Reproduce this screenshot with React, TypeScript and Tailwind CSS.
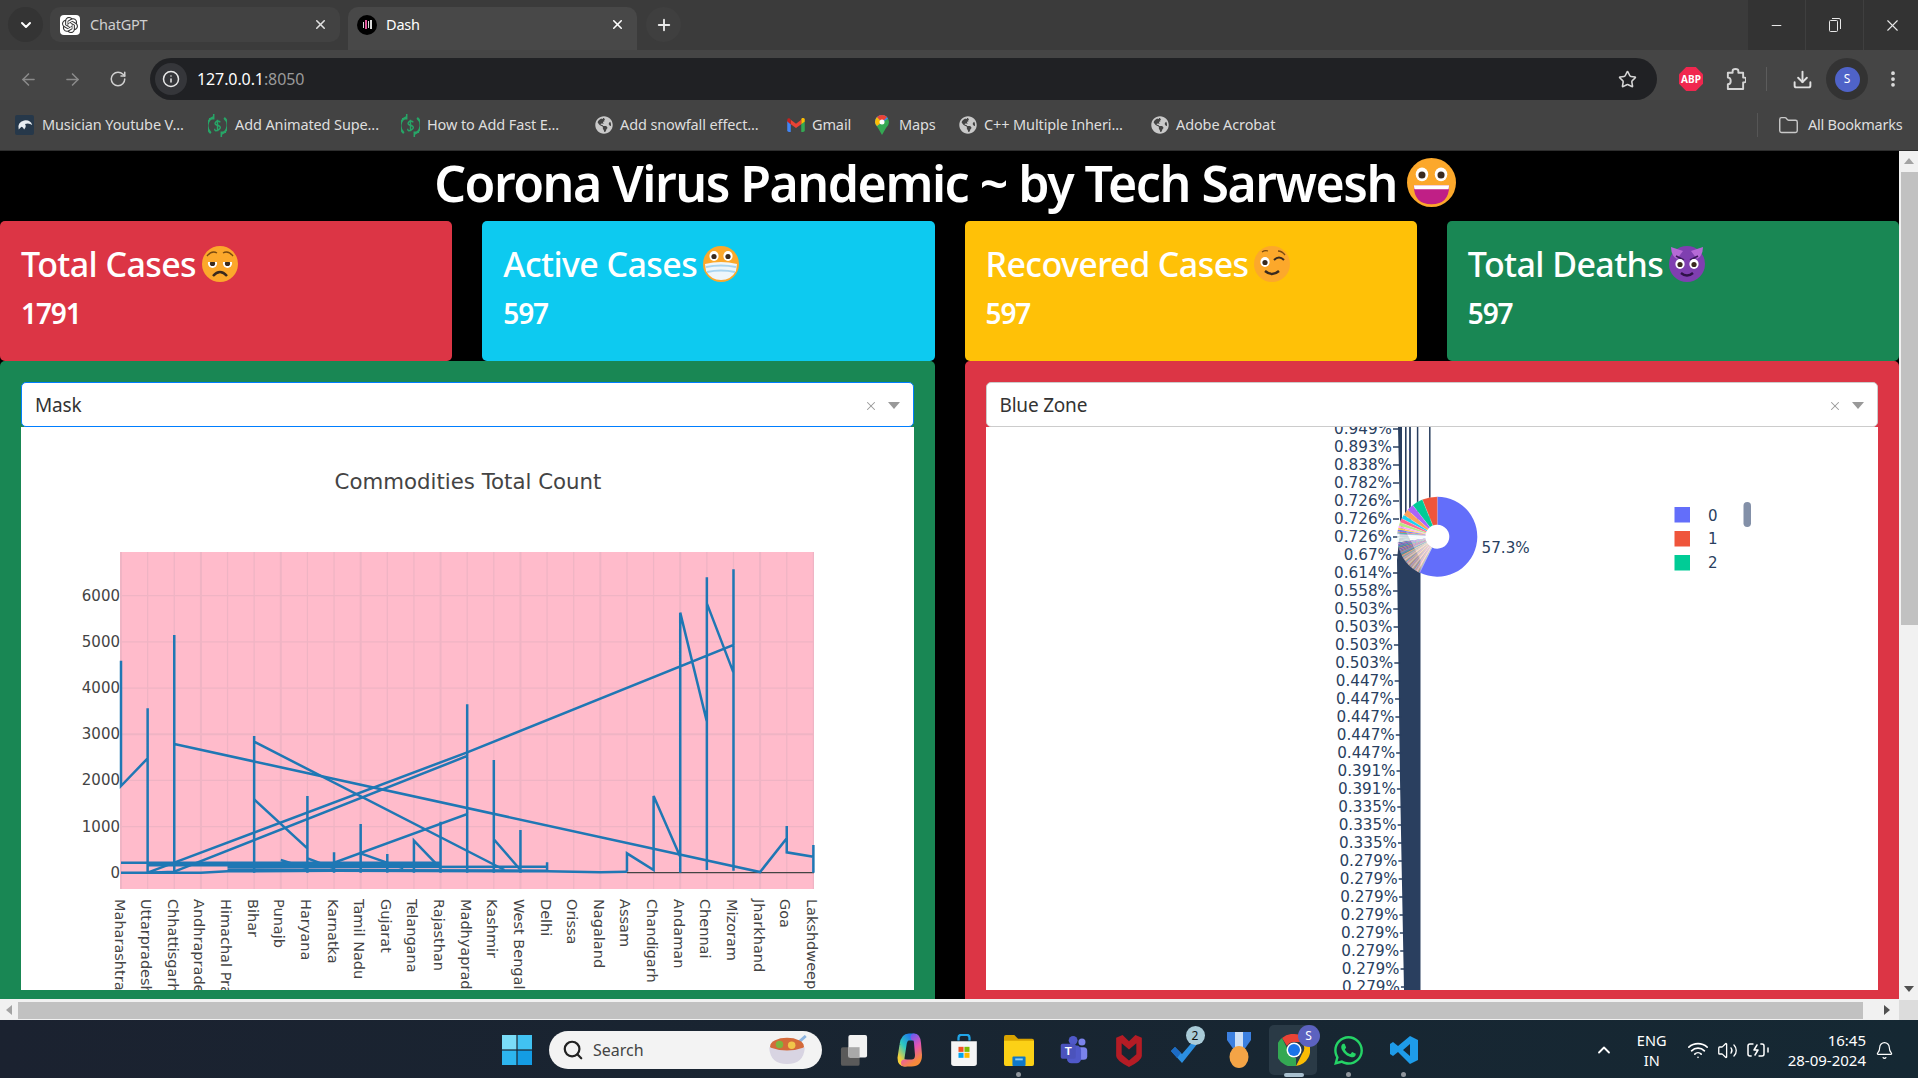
import {
  ArrowLeft,
  ArrowRight,
  BatteryCharging,
  Bell,
  ChevronDown,
  ChevronUp,
  Download,
  EllipsisVertical,
  Folder,
  Info,
  Minus,
  Plus,
  RotateCw,
  Search,
  Star,
  Volume2,
  Wifi,
  X,
} from "lucide-react";
import { FaGlobeAmericas, FaWhatsapp } from "react-icons/fa";
import { SiOpenai } from "react-icons/si";

const FONT = "font-['Noto_Sans','Open_Sans',sans-serif]";

const states = [
  "Maharashtra", "Uttarpradesh", "Chhattisgarh", "Andhrapradesh", "Himachal Pradesh", "Bihar", "Punajb",
  "Haryana", "Karnatka", "Tamil Nadu", "Gujarat", "Telangana", "Rajasthan", "Madhyapradesh", "Kashmir",
  "West Bengal", "Delhi", "Orissa", "Nagaland", "Assam", "Chandigarh", "Andaman", "Chennai", "Mizoram",
  "Jharkhand", "Goa", "Lakshdweep",
];

const px = (i: number) => 121 + i * 26.63;
const py = (z: number) => 540 + z / 3;

// line trace, [category index, y measured on the crop]
const traces: [number, number][][] = [
  [[0, 362], [0, 738], [1, 655], [1, 505], [1, 998], [2, 995], [2, 285], [2, 612], [24, 996], [25, 895], [25, 858], [25, 937], [26, 950], [26, 915], [26, 998]],
  [[2, 968], [13, 637], [23, 315], [23, 88], [23, 992], [23, 398], [22, 190], [22, 112], [22, 990], [22, 545], [21, 218], [21, 998], [21, 950], [20, 768], [20, 990], [19, 940], [19, 995]],
  [[1, 998], [2, 968]],
  [[2, 995], [13, 648], [13, 493], [13, 998], [13, 822], [8, 968], [8, 937], [8, 998]],
  [[5, 998], [5, 588], [5, 605], [14.4, 990]],
  [[5, 778], [7, 925], [7, 768], [7, 998], [7, 955], [8, 985]],
  [[14, 998], [14, 660], [14, 898], [15, 990], [15, 870], [15, 998]],
  [[9, 998], [9, 852], [9, 940], [10.6, 985]],
  [[10, 998], [10, 942]],
  [[11, 998], [11, 902], [12, 985], [12, 845], [12, 998]],
  [[6, 960], [7, 985]],
  [[0, 968], [12, 968]],
  [[1, 976], [12, 976]],
  [[4, 982], [16, 980], [16, 967], [16, 992], [4, 990]],
  [[0, 998], [3, 998], [4, 994], [8, 992], [16, 994], [18, 997], [19, 995]],
];

const yTicks = [0, 1000, 2000, 3000, 4000, 5000, 6000];

const LineChart = () => (
  <svg viewBox="21 427 893 563" className="h-[563px] w-[893px] bg-white">
    <text x="468" y="489" textAnchor="middle" fontSize="21.3" fill="#444" fontFamily="DejaVu Sans">
      Commodities Total Count
    </text>
    <rect x="121" y="552" width="693" height="337" fill="#ffbbcb" />
    {states.map((_, i) => (
      <line key={i} x1={px(i)} x2={px(i)} y1="552" y2="889" stroke="#efb4c4" strokeWidth={i % 3 === 0 ? 2 : 1.25} />
    ))}
    {yTicks.map((v) => {
      const y = 872.7 - v * 0.04617;
      return (
        <g key={v}>
          {v > 0 && <line x1="121" x2="814" y1={y} y2={y} stroke="#efb4c4" strokeWidth={v === 3000 ? 2 : 1.25} />}
          <text x="120" y={y + 5} textAnchor="end" fontSize="15" fill="#444" fontFamily="DejaVu Sans">
            {v}
          </text>
        </g>
      );
    })}
    <line x1="627" x2="814" y1="872.7" y2="872.7" stroke="#444" strokeWidth="1.25" />
    {traces.map((t, i) => (
      <polyline
        key={i}
        points={t.map(([c, z]) => `${px(c)},${py(z)}`).join(" ")}
        fill="none"
        stroke="#1f77b4"
        strokeWidth="2.5"
        strokeLinejoin="miter"
      />
    ))}
    {states.map((s, i) => (
      <text
        key={s}
        transform={`translate(${px(i) - 6.5} 899) rotate(90)`}
        fontSize="14.5"
        fill="#444"
        fontFamily="DejaVu Sans"
      >
        {s}
      </text>
    ))}
  </svg>
);

const pieLabels = [
  "0.949%", "0.893%", "0.838%", "0.782%", "0.726%", "0.726%", "0.726%", "0.67%", "0.614%", "0.558%", "0.503%",
  "0.503%", "0.503%", "0.503%", "0.447%", "0.447%", "0.447%", "0.447%", "0.447%", "0.391%", "0.391%", "0.335%",
  "0.335%", "0.335%", "0.279%", "0.279%", "0.279%", "0.279%", "0.279%", "0.279%", "0.279%", "0.279%",
];

const palette = ["#636efa", "#ef553b", "#00cc96", "#ab63fa", "#ffa15a", "#19d3f3", "#ff6692", "#b6e880", "#ff97ff", "#fecb52"];
const CX = 1437.3;
const CY = 536.7;

const slicePath = (a0: number, a1: number) => {
  const r0 = 40;
  const r1 = 12;
  const p = (r: number, a: number) => {
    const t = (a * Math.PI) / 180;
    return `${(CX + r * Math.sin(t)).toFixed(2)} ${(CY - r * Math.cos(t)).toFixed(2)}`;
  };
  const big = a1 - a0 > 180 ? 1 : 0;
  return `M${p(r1, a0)}L${p(r0, a0)}A${r0} ${r0} 0 ${big} 1 ${p(r0, a1)}L${p(r1, a1)}A${r1} ${r1} 0 ${big} 0 ${p(r1, a0)}Z`;
};

// widths in degrees, counter-clockwise from 12 o'clock after the large slice
const buildSlices = () => {
  const out: { a0: number; a1: number; color: string; stroke: number }[] = [];
  const widths = [22, 16, 10, 9, 6, 6, 5, 3, 3, 2.4, 1.5, 1.5, 1.2];
  let at = 0;
  let idx = 1;
  const push = (w: number, color: string, stroke: number) => {
    out.push({ a0: 360 - at - w, a1: 360 - at, color, stroke });
    at += w;
  };
  widths.forEach((w) => {
    push(w, palette[idx % 10], 0.15);
    idx += 1;
  });
  while (at < 98) {
    push(1.3, idx % 3 === 0 ? "#ffffff" : "#e7f6f6", 0.1);
    idx += 1;
  }
  while (at < 118) {
    push(0.55, idx % 4 === 0 ? "#3a3ad0" : palette[(idx * 3) % 10], 0.05);
    idx += 1;
  }
  while (at < 153.7) {
    push(0.8, idx % 5 === 0 ? "#8a7f86" : palette[idx % 10], 0.16);
    idx += 1;
  }
  return out;
};

const PieChart = () => (
  <svg viewBox="986 427 892 563" className="h-[563px] w-[892px] bg-white">
    <polygon points="1398,427 1402,427 1402,520 1400,530 1397,560 1400,780 1404,990 1420.5,990 1420.5,560 1400,520" fill="#2a3f5f" />
    {[[1405.8, 1.6], [1410, 1.8], [1417.6, 1.5], [1429.8, 1.5]].map(([x, w]) => (
      <line key={x} x1={x} x2={x} y1="427" y2="520" stroke="#2a3f5f" strokeWidth={w} />
    ))}
    {pieLabels.map((label, i) => {
      const y = 429 + i * 18;
      const right = y < 600 ? 1392 : 1392 + ((y - 600) * 8) / 390;
      return (
        <g key={i}>
          <text x={right} y={y + 5} textAnchor="end" fontSize="15.2" fill="#2a3f5f" fontFamily="DejaVu Sans">
            {label}
          </text>
          <line x1={right + 1} x2={right + 7} y1={y} y2={y} stroke="#2a3f5f" strokeWidth="1.5" />
        </g>
      );
    })}
    <path d={slicePath(0, 206.3)} fill="#636efa" />
    {buildSlices().map((s, i) => (
      <path key={i} d={slicePath(s.a0, s.a1)} fill={s.color} stroke="#fff" strokeWidth={s.stroke} />
    ))}
    <text x="1481.5" y="553" fontSize="15.2" fill="#2a3f5f" fontFamily="DejaVu Sans">
      57.3%
    </text>
    {[0, 1, 2].map((n) => (
      <g key={n}>
        <rect x="1674.5" y={507 + n * 24} width="15.5" height="15.5" fill={palette[n]} />
        <text x="1708" y={520.5 + n * 23.8} fontSize="15" fill="#2a3f5f" fontFamily="DejaVu Sans">
          {n}
        </text>
      </g>
    ))}
    <rect x="1743.5" y="502" width="7.5" height="25" rx="3.7" fill="#8390a8" />
  </svg>
);

const Face = ({ children, bg = "#fca82b" }: { children: React.ReactNode; bg?: string }) => (
  <svg viewBox="0 0 36 36" className="size-full">
    <circle cx="18" cy="18" r="18" fill={bg} />
    {children}
  </svg>
);

const Eye = ({ x, y = 15 }: { x: number; y?: number }) => (
  <>
    <ellipse cx={x} cy={y} rx="4.6" ry="5" fill="#fff" />
    <circle cx={x} cy={y + 0.5} r="2.6" fill="#3a2a1e" />
  </>
);

const emojis = {
  tired: (
    <Face>
      <path d="M5 10q5-6 10-3M21 7q5-3 10 3" stroke="#7a4a10" strokeWidth="1.4" fill="none" />
      <Eye x={10.5} y={17} />
      <Eye x={25.5} y={17} />
      <rect x="5" y="11" width="11" height="5" fill="#fca82b" />
      <rect x="20" y="11" width="11" height="5" fill="#fca82b" />
      <path d="M11 30q7-8 14 0" stroke="#3a2a1e" strokeWidth="2.4" fill="none" />
    </Face>
  ),
  mask: (
    <Face>
      <Eye x={11} y={10} />
      <Eye x={25} y={10} />
      <path d="M2 18q16-4 32 0l-1 7q-5 9-15 9T3 25z" fill="#eef6fb" />
      <path d="M3 21q15-3 30 0M4 26q14-3 28 0" stroke="#a8d4f0" strokeWidth="2.2" fill="none" />
    </Face>
  ),
  wink: (
    <Face>
      <Eye x={11} y={16} />
      <path d="M20 14q5-5 10 0" stroke="#3a2a1e" strokeWidth="2" fill="none" />
      <path d="M8 6q3-2 6-1M24 5q4 0 7 4" stroke="#7a4a10" strokeWidth="1.3" fill="none" />
      <path d="M11 25q7 6 14 0" stroke="#3a2a1e" strokeWidth="2.4" fill="none" />
    </Face>
  ),
  devil: (
    <Face bg="#7f3fb0">
      <path d="M2 1q0 9 6 12l6-8zM34 1q0 9-6 12l-6-8z" fill="#b56ad6" />
      <path d="M7 10l8 4M29 10l-8 4" stroke="#3c1a5c" strokeWidth="1.6" />
      <Eye x={11} y={18} />
      <Eye x={25} y={18} />
      <path d="M12 27q6 5 12 0" stroke="#2e1247" strokeWidth="2.4" fill="none" />
    </Face>
  ),
  grin: (
    <Face>
      <Eye x={11} y={12} />
      <Eye x={25} y={12} />
      <path d="M5 20h26q0 14-13 14T5 20z" fill="#c01f86" />
      <path d="M5 20h26l-.5 3h-25z" fill="#fff" />
    </Face>
  ),
};

const statCards = [
  { title: "Total Cases", value: "1791", bg: "bg-[#dc3545]", emoji: emojis.tired },
  { title: "Active Cases", value: "597", bg: "bg-[#0dcaf0]", emoji: emojis.mask },
  { title: "Recovered Cases", value: "597", bg: "bg-[#ffc107]", emoji: emojis.wink },
  { title: "Total Deaths", value: "597", bg: "bg-[#198754]", emoji: emojis.devil },
];

const StatCard = ({ title, value, bg, emoji }: (typeof statCards)[number]) => (
  <div className={`h-[140px] rounded-[5px] ${bg} px-[21px] pt-[25px] text-white`}>
    <div className="flex h-[36px] items-center">
      <span className="text-[34px] leading-none font-medium tracking-[-0.6px]">{title}</span>
      <span className="ml-[6px] size-[36px]">{emoji}</span>
    </div>
    <div className="mt-[17px] text-[28px] leading-none font-semibold tracking-[-1.1px]">{value}</div>
  </div>
);

const Select = ({ value, focused }: { value: string; focused?: boolean }) => (
  <div
    className={`flex h-[45px] items-center rounded-[5px] border bg-white pt-[2px] pr-[13px] pl-[13px] text-[19px] text-[#333] ${
      focused ? "border-[#007eff]" : "border-[#cccccc]"
    }`}
  >
    <span className="flex-1 tracking-[-0.2px]">{value}</span>
    <X className="mr-[10px] size-[14px] text-[#999]" strokeWidth={1.8} />
    <span className="h-0 w-0 border-x-[6px] border-t-[7px] border-x-transparent border-t-[#999]" />
  </div>
);

const ChartPanel = ({ bg, children }: { bg: string; children: React.ReactNode }) => (
  <div className={`h-[700px] rounded-[5px] ${bg} p-[21px]`}>{children}</div>
);

const Dashboard = () => (
  <main className="flex h-full min-w-0 flex-1 flex-col overflow-hidden bg-black">
    <div className="flex h-[70px] shrink-0 items-center justify-center pr-[9px] pb-[7px] text-[50px] font-semibold tracking-[-1.48px] text-white">
      <span className="leading-none">Corona Virus Pandemic ~ by Tech Sarwesh</span>
      <span className="ml-[10px] size-[49px]">{emojis.grin}</span>
    </div>
    <div className="grid shrink-0 grid-cols-4 gap-[30px]">
      {statCards.map((c) => (
        <StatCard key={c.title} {...c} />
      ))}
    </div>
    <div className="grid grid-cols-2 gap-[30px]">
      <ChartPanel bg="bg-[#198754]">
        <Select value="Mask" focused />
        <LineChart />
      </ChartPanel>
      <ChartPanel bg="bg-[#dc3545]">
        <Select value="Blue Zone" />
        <PieChart />
      </ChartPanel>
    </div>
  </main>
);

const VScrollbar = () => (
  <div className="flex h-full w-[19px] shrink-0 flex-col bg-[#f1f1f1]">
    <div className="flex h-[20px] items-center justify-center">
      <span className="h-0 w-0 border-x-[5px] border-b-[6px] border-x-transparent border-b-[#a3a3a3]" />
    </div>
    <div className="mt-[1px] ml-[2px] h-[453px] bg-[#c1c1c1]" />
    <div className="flex-1" />
    <div className="flex h-[20px] items-center justify-center">
      <span className="h-0 w-0 border-x-[5px] border-t-[6px] border-x-transparent border-t-[#505050]" />
    </div>
  </div>
);

const HScrollbar = () => (
  <div className="flex h-[21px] shrink-0 items-center bg-[#f1f1f1] pt-[1px]">
    <div className="flex w-[18px] justify-center">
      <span className="h-0 w-0 border-y-[5px] border-r-[6px] border-y-transparent border-r-[#a3a3a3]" />
    </div>
    <div className="h-[17px] w-[1845px] bg-[#c1c1c1]" />
    <div className="flex w-[36px] justify-center pl-[12px]">
      <span className="h-0 w-0 border-y-[5px] border-l-[6px] border-y-transparent border-l-[#505050]" />
    </div>
    <div className="h-full flex-1 bg-[#dcdcdc]" />
  </div>
);

const ChatGptIcon = () => (
  <span className="flex size-[20px] items-center justify-center rounded-[4px] bg-white">
    <SiOpenai className="size-[16px] text-[#333]" />
  </span>
);

const DashIcon = () => (
  <span className="flex size-[20px] items-center justify-center gap-[1px] rounded-full bg-black">
    <span className="h-[6px] w-[1.5px] bg-[#d9d9d9]" />
    <span className="h-[9px] w-[1.5px] bg-[#e0559a]" />
    <span className="h-[7px] w-[1.5px] bg-[#d9d9d9]" />
    <span className="h-[9px] w-[1.5px] bg-[#d9d9d9]" />
  </span>
);

const TabStrip = () => (
  <div className="flex h-[50px] shrink-0 bg-[#3b3b3b] pt-[7px] pl-[8px]">
    <div className="flex size-[35px] items-center justify-center rounded-full bg-[#343434] text-white">
      <ChevronDown className="size-[16px]" strokeWidth={3} />
    </div>
    <div className="ml-[7px] flex h-[35px] w-[290px] items-center rounded-[10px] bg-[#424242] pr-[12px] pl-[10px] text-[14.5px] text-[#cfcfcf]">
      <ChatGptIcon />
      <span className="ml-[10px] flex-1 tracking-[-0.2px]">ChatGPT</span>
      <X className="size-[15px] text-[#e0e0e0]" strokeWidth={2.5} />
    </div>
    <div className="ml-[8px] flex h-[43px] w-[289px] items-center rounded-t-[10px] bg-[#484848] pr-[12px] pb-[8px] pl-[9px] text-[14.5px] text-white">
      <DashIcon />
      <span className="ml-[9px] flex-1 tracking-[-0.2px]">Dash</span>
      <X className="size-[15px]" strokeWidth={2.5} />
    </div>
    <div className="ml-[9px] flex size-[35px] items-center justify-center rounded-full bg-[#3f3f3f] text-[#e8e8e8]">
      <Plus className="size-[18px]" strokeWidth={2.5} />
    </div>
    <div className="ml-auto -mt-[7px] flex h-[50px] w-[170px] bg-[#333333] text-[#e8e8e8]">
      <div className="flex w-[58px] items-center justify-center border-r border-[#3f3f3f]">
        <Minus className="size-[15px]" strokeWidth={1.7} />
      </div>
      <div className="flex w-[58px] items-center justify-center border-r border-[#3f3f3f]">
        <svg viewBox="0 0 12 14" className="h-[14px] w-[12px]" fill="none" stroke="currentColor" strokeWidth="1">
          <rect x="0.5" y="2.5" width="8" height="11" rx="1" />
          <path d="M3 .5h7a1.5 1.5 0 0 1 1.500 1.500v9" />
        </svg>
      </div>
      <div className="flex flex-1 items-center justify-center pl-[2px]">
        <X className="size-[19px]" strokeWidth={1.4} />
      </div>
    </div>
  </div>
);

const ExtensionIcon = () => (
  <svg viewBox="0 0 22 24" className="h-[23px] w-[21px]" fill="none" stroke="#d5d5d5" strokeWidth="2" strokeLinejoin="round">
    <path d="M3 5h5V3q0-2 3-2t3 2v2h5v5h1.500q1.500 0 1.500 2.500T20.500 15H19v7H3v-5q3 0 3-3.500T3 10z" />
  </svg>
);

const Toolbar = () => (
  <div className="flex h-[50px] shrink-0 items-center bg-[#454545] pt-[8px] text-[#c7c7c7]">
    <div className="flex w-[150px] items-center pl-[19px]">
      <ArrowLeft className="size-[19px] text-[#8a8a8a]" strokeWidth={2} />
      <ArrowRight className="ml-[25px] size-[19px] text-[#8a8a8a]" strokeWidth={2} />
      <RotateCw className="ml-[27px] size-[18px] text-[#d0d0d0]" strokeWidth={2} />
    </div>
    <div className="flex h-[42px] w-[1507px] items-center rounded-full bg-[#202124] pr-[20px] pl-[5px]">
      <span className="flex size-[32px] items-center justify-center rounded-full bg-[#35363a]">
        <Info className="size-[18px] text-[#e8e8e8]" strokeWidth={2} />
      </span>
      <span className="ml-[10px] flex-1 text-[16px] tracking-[-0.1px] text-white">
        127.0.0.1<span className="text-[#9a9a9a]">:8050</span>
      </span>
      <Star className="size-[19px] text-[#d5d5d5]" strokeWidth={2} />
    </div>
    <span className="ml-[22px] flex size-[24px] items-center justify-center bg-[#f0274f] text-[10px] font-bold text-white [clip-path:polygon(30%_0,70%_0,100%_30%,100%_70%,70%_100%,30%_100%,0_70%,0_30%)]">
      ABP
    </span>
    <span className="ml-[22px]">
      <ExtensionIcon />
    </span>
    <span className="ml-[20px] h-[24px] w-px bg-[#5c5c5c]" />
    <Download className="ml-[25px] size-[21px] text-[#e0e0e0]" strokeWidth={2.2} />
    <span className="ml-[13px] flex size-[42px] items-center justify-center rounded-full bg-[#333333]">
      <span className="flex size-[25px] items-center justify-center rounded-full bg-[#4f63c8] text-[12px] text-white">
        S
      </span>
    </span>
    <EllipsisVertical className="ml-[15px] size-[20px] text-[#e0e0e0]" strokeWidth={2.5} />
  </div>
);

const CoinIcon = () => (
  <svg viewBox="0 0 20 24" className="h-[23px] w-[20px]" fill="none" stroke="#27a567" strokeWidth="2.2">
    <path d="M6 3a10 10 0 0 0-3 17M14 21a10 10 0 0 0 3-17" />
    <path d="M6 0v5H1M14 24v-5h5" strokeWidth="1.6" />
    <path d="M13 8.500q-3-2.500-5 0t3 3.500q4 2 0 4.500t-4-1M10 6v12" strokeWidth="1.500" />
  </svg>
);

const GlobeIcon = () => <FaGlobeAmericas className="size-[18px] text-[#c9c9c9]" />;

const GmailIcon = () => (
  <svg viewBox="0 0 20 16" className="h-[14px] w-[18px]">
    <path d="M0 3v11a2 2 0 0 0 2 2h2V7z" fill="#4285f4" />
    <path d="M20 3v11a2 2 0 0 1-2 2h-2V7z" fill="#34a853" />
    <path d="M16 1.500V7l4-3V2.500a2 2 0 0 0-4-1z" fill="#fbbc04" />
    <path d="M4 7V2l6 4.500L16 2v5l-6 4.500z" fill="#ea4335" />
    <path d="M0 4v-1.500a2 2 0 0 1 4-.5V7z" fill="#c5221f" />
  </svg>
);

const MapsIcon = () => (
  <svg viewBox="0 0 14 20" className="h-[20px] w-[14px]">
    <path d="M7 0a7 7 0 0 1 7 7q0 3-3 6l-4 7-4-7Q0 10 0 7a7 7 0 0 1 7-7z" fill="#34a853" />
    <path d="M7 0a7 7 0 0 1 6 3.500L2 11Q0 9 0 7a7 7 0 0 1 7-7z" fill="#4285f4" />
    <path d="M2 2L7 7 2 11Q0 9 0 7q0-3 2-5z" fill="#fbbc04" />
    <path d="M2 2a7 7 0 0 1 5-2 7 7 0 0 1 5 2L7 7z" fill="#ea4335" />
    <circle cx="7" cy="7" r="2.500" fill="#fff" />
  </svg>
);

const MusicIcon = () => (
  <span className="flex size-[20px] items-center justify-center rounded-[2px] bg-[#26384a]">
    <svg viewBox="0 0 20 20" className="size-[18px]" fill="#e8edf2">
      <path d="M3 15q-2-8 6-10 7-1 9 5-4-3-8-1 2 3-1 6-1-3-3-3z" />
    </svg>
  </span>
);

const bookmarks = [
  { label: "Musician Youtube V...", width: "w-[193px]", icon: <MusicIcon />, gap: "ml-[8px]", iconBox: "w-[19px]" },
  { label: "Add Animated Supe...", width: "w-[193px]", icon: <CoinIcon />, gap: "ml-[8px]", iconBox: "w-[19px]" },
  { label: "How to Add Fast E...", width: "w-[193px]", icon: <CoinIcon />, gap: "ml-[7px]", iconBox: "w-[19px]" },
  { label: "Add snowfall effect...", width: "w-[192px]", icon: <GlobeIcon />, gap: "ml-[7px]", iconBox: "w-[19px]" },
  { label: "Gmail", width: "w-[88px]", icon: <GmailIcon />, gap: "ml-[7px]", iconBox: "w-[19px]" },
  { label: "Maps", width: "w-[84px]", icon: <MapsIcon />, gap: "ml-[9px]", iconBox: "w-[16px]" },
  { label: "C++ Multiple Inheri...", width: "w-[192px]", icon: <GlobeIcon />, gap: "ml-[7px]", iconBox: "w-[19px]" },
  { label: "Adobe Acrobat", width: "w-[150px]", icon: <GlobeIcon />, gap: "ml-[7px]", iconBox: "w-[19px]" },
];

const BookmarksBar = () => (
  <div className="flex h-[51px] shrink-0 items-center border-b border-[#2e2e2e] bg-[#434343] pl-[15px] text-[14.5px] tracking-[-0.12px] text-[#dedede]">
    {bookmarks.map((b) => (
      <div key={b.label} className={`flex items-center ${b.width}`}>
        <span className={`flex justify-center ${b.iconBox}`}>{b.icon}</span>
        <span className={b.gap}>{b.label}</span>
      </div>
    ))}
    <span className="ml-[457px] h-[24px] w-px bg-[#565656]" />
    <Folder className="ml-[20px] size-[21px] text-[#c9c9c9]" strokeWidth={1.6} />
    <span className="ml-[9px] tracking-[-0.25px]">All Bookmarks</span>
  </div>
);

const WinLogo = () => (
  <svg viewBox="0 0 30 30" className="size-[30px]">
    <rect width="14.4" height="14.4" fill="#7adcf7" />
    <rect x="15.6" width="14.4" height="14.4" fill="#41c2f2" />
    <rect y="15.6" width="14.4" height="14.4" fill="#2db5ef" />
    <rect x="15.6" y="15.6" width="14.4" height="14.4" fill="#149ce4" />
  </svg>
);

const TaskView = () => (
  <svg viewBox="0 0 30 34" className="h-[32px] w-[28px]">
    <rect x="1" y="14" width="20" height="20" rx="2" fill="#5a5a5a" />
    <rect x="9" y="1" width="20" height="24" rx="2" fill="#f2f2f2" />
    <rect x="9" y="14" width="12" height="11" fill="#a9a9a9" />
  </svg>
);

const Copilot = () => (
  <svg viewBox="0 0 30 36" className="h-[36px] w-[30px]" fill="none" strokeLinecap="round">
    <defs>
      <linearGradient id="copA" x1="0.8" y1="0" x2="0.2" y2="1">
        <stop offset="0" stopColor="#1f7fe8" />
        <stop offset="0.5" stopColor="#2dc8c0" />
        <stop offset="1" stopColor="#f5cf3a" />
      </linearGradient>
      <linearGradient id="copB" x1="0.3" y1="0" x2="0.7" y2="1">
        <stop offset="0" stopColor="#6a5cf0" />
        <stop offset="0.5" stopColor="#e454b4" />
        <stop offset="1" stopColor="#f68a3a" />
      </linearGradient>
    </defs>
    <path d="M19 5h-4q-5 0-6 8l-2 13q0 5 4 5" stroke="url(#copA)" strokeWidth="7" />
    <path d="M20 5q3 0 3.500 6l1 12q0 8-7 8h-7" stroke="url(#copB)" strokeWidth="7" />
  </svg>
);

const Store = () => (
  <svg viewBox="0 0 30 36" className="h-[33px] w-[28px]">
    <path d="M9 7V4q0-3 3-3h6q3 0 3 3v3" stroke="#21a5e8" strokeWidth="2.500" fill="none" />
    <path d="M1 8h28v24q0 3-3 3H4q-3 0-3-3z" fill="#f5f5f5" />
    <rect x="9" y="14" width="5.500" height="5.500" fill="#f25022" />
    <rect x="15.500" y="14" width="5.500" height="5.500" fill="#7fba00" />
    <rect x="9" y="20.500" width="5.500" height="5.500" fill="#00a4ef" />
    <rect x="15.500" y="20.500" width="5.500" height="5.500" fill="#ffb900" />
  </svg>
);

const Explorer = () => (
  <svg viewBox="0 0 32 34" className="h-[32px] w-[30px]">
    <path d="M0 3q0-2 2-2h9l4 4h15q2 0 2 2v4H0z" fill="#d9a300" />
    <path d="M0 7h32v25q0 2-2 2H2q-2 0-2-2z" fill="#fcd116" />
    <rect x="9" y="24" width="14" height="10" rx="1" fill="#0f78c9" />
    <rect x="12" y="26" width="8" height="2" fill="#8fd0f5" />
  </svg>
);

const Teams = () => (
  <svg viewBox="0 0 32 34" className="h-[30px] w-[30px]">
    <circle cx="25" cy="8" r="4" fill="#7b83eb" />
    <rect x="20" y="14" width="11" height="14" rx="4" fill="#7b83eb" />
    <circle cx="15" cy="6" r="5" fill="#5059c9" />
    <rect x="8" y="12" width="16" height="20" rx="5" fill="#5059c9" />
    <rect x="1" y="10" width="17" height="17" rx="2" fill="#4b53bc" />
    <text x="9.500" y="23" textAnchor="middle" fontSize="13" fontWeight="700" fill="#fff" fontFamily="Liberation Sans">
      T
    </text>
  </svg>
);

const Mcafee = () => (
  <svg viewBox="0 0 28 36" className="h-[33px] w-[26px]">
    <path d="M0 4l7-3 7 7 7-7 7 3v20q0 5-14 12Q0 29 0 24zM6 10v12l8 7 8-7V10l-8 7z" fill="#b51c25" fillRule="evenodd" />
  </svg>
);

const Todo = () => (
  <span className="relative flex size-[36px] items-center justify-center">
    <svg viewBox="0 0 30 30" className="size-[30px]">
      <path d="M2 16l4-4 7 7 13-15 3 4-16 20z" fill="#2c8fe0" />
      <path d="M2 16l4-4 6 6-4 5z" fill="#1c6bc4" />
    </svg>
    <span className="absolute -top-[6px] -right-[3px] flex size-[19px] items-center justify-center rounded-full bg-[#a9cbd8] text-[12px] text-[#111]">
      2
    </span>
  </span>
);

const Medal = () => (
  <svg viewBox="0 0 26 36" className="h-[36px] w-[26px]">
    <path d="M1 0h24v8L18 18H8L1 8z" fill="#3c80e0" />
    <path d="M9 0h8v18H9z" fill="#cfe0f5" />
    <ellipse cx="13" cy="25" rx="9.500" ry="11" fill="#f4a446" />
  </svg>
);

const ChromeLogo = () => (
  <span className="relative flex size-[32px] items-center justify-center">
    <svg viewBox="0 0 32 32" className="size-[32px]">
      <path d="M16 0a16 16 0 0 1 14 8H16a8 8 0 0 0-7 4L4 4a16 16 0 0 1 12-4z" fill="#ea4335" />
      <path d="M30 8a16 16 0 0 1-12 24l6-12a8 8 0 0 0-1-12z" fill="#fbbc04" />
      <path d="M4 4l7 14a8 8 0 0 0 7 6l-0 8A16 16 0 0 1 4 4z" fill="#34a853" />
      <circle cx="16" cy="16" r="7.500" fill="#fff" />
      <circle cx="16" cy="16" r="6" fill="#1a73e8" />
    </svg>
    <span className="absolute -top-[9px] -right-[10px] flex size-[22px] items-center justify-center rounded-full bg-[#5c62c0] text-[12px] text-white">
      S
    </span>
  </span>
);

const VsCode = () => (
  <svg viewBox="0 0 30 30" className="size-[30px]">
    <path d="M21 1l8 4v20l-8 4-12-12-5 4-3-2v-10l3-2 5 4zM21 9l-7 6 7 6z" fill="#1e9be8" fillRule="evenodd" />
  </svg>
);

const apps = [
  { key: "task", icon: <TaskView /> },
  { key: "copilot", icon: <Copilot /> },
  { key: "store", icon: <Store /> },
  { key: "files", icon: <Explorer />, dot: true },
  { key: "teams", icon: <Teams /> },
  { key: "mcafee", icon: <Mcafee /> },
  { key: "todo", icon: <Todo /> },
  { key: "medal", icon: <Medal /> },
  { key: "chrome", icon: <ChromeLogo />, active: true },
  { key: "whatsapp", icon: <FaWhatsapp className="size-[33px] text-[#25d366]" />, dot: true },
  { key: "code", icon: <VsCode />, dot: true },
];

const Taskbar = () => (
  <div className="flex h-[58px] shrink-0 items-center bg-gradient-to-r from-[#1b2230] to-[#152833] pt-[2px] pl-[502px] text-white">
    <WinLogo />
    <div className="ml-[17px] flex h-[38px] w-[273px] items-center rounded-full bg-[#f3f3f3] pr-[14px] pl-[13px] text-[#444]">
      <Search className="size-[22px] text-[#222]" strokeWidth={2.4} />
      <span className="ml-[9px] flex-1 text-[16px]">Search</span>
      <svg viewBox="0 0 44 32" className="h-[30px] w-[42px]">
        <path d="M32 10L42 1" stroke="#8cb4e0" strokeWidth="3" />
        <ellipse cx="22" cy="12" rx="18" ry="9" fill="#d46a3a" />
        <circle cx="14" cy="10" r="4" fill="#7fb23d" />
        <circle cx="27" cy="11" r="4" fill="#f0c64a" />
        <path d="M3 13q1 18 19 18t19-18q-19 7-38 0z" fill="#d8d4e2" />
      </svg>
    </div>
    <div className="ml-[4px] flex">
      {apps.map((a) => (
        <div key={a.key} className="relative flex h-[50px] w-[55px] items-center justify-center">
          {a.active && <span className="absolute inset-y-0 left-[3px] w-[48px] rounded-[5px] bg-[#2a3a46]" />}
          <span className="relative flex items-center justify-center">{a.icon}</span>
          {a.dot && <span className="absolute -bottom-[2px] size-[5px] rounded-full bg-[#8f959c]" />}
          {a.active && <span className="absolute -bottom-[2px] h-[4px] w-[20px] rounded-full bg-[#a9c0cf]" />}
        </div>
      ))}
    </div>
    <div className="ml-auto flex items-center pr-[24px]">
      <ChevronUp className="size-[20px]" strokeWidth={2.2} />
      <div className="ml-[14px] flex w-[48px] flex-col items-center text-[14.5px] leading-[20px]">
        <span>ENG</span>
        <span>IN</span>
      </div>
      <Wifi className="ml-[11px] size-[22px]" strokeWidth={1.8} />
      <Volume2 className="ml-[8px] size-[21px]" strokeWidth={1.5} />
      <BatteryCharging className="ml-[8px] size-[24px]" strokeWidth={1.5} />
      <div className="ml-[18px] flex flex-col items-end text-[15px] leading-[20px]">
        <span>16:45</span>
        <span>28-09-2024</span>
      </div>
      <Bell className="ml-[9px] size-[19px]" strokeWidth={1.5} />
    </div>
  </div>
);

export default function App() {
  return (
    <div className={`flex h-[1078px] w-[1918px] flex-col overflow-hidden bg-black ${FONT}`}>
      <TabStrip />
      <Toolbar />
      <BookmarksBar />
      <div className="flex h-[848px] min-h-0">
        <Dashboard />
        <VScrollbar />
      </div>
      <HScrollbar />
      <Taskbar />
    </div>
  );
}
